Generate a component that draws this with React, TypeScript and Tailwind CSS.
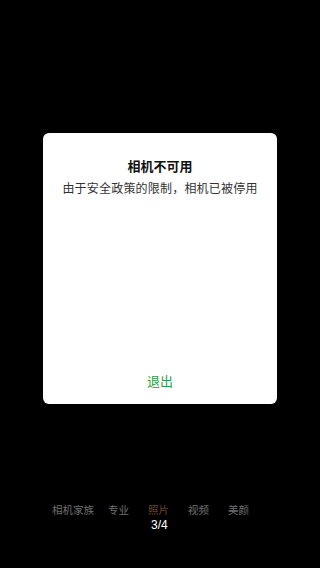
import React from "react";

export default function App() {
  const tabs = [
    { t: "相机家族", c: "text-[#707070]", m: "ml-[52px]" },
    { t: "专业", c: "text-[#707070]", m: "ml-[14px]" },
    { t: "照片", c: "text-[#6b4328]", m: "ml-[19px]" },
    { t: "视频", c: "text-[#707070]", m: "ml-[19px]" },
    { t: "美颜", c: "text-[#707070]", m: "ml-[19px]" },
  ];
  return (
    <div
      className="w-[320px] h-[568px] bg-black flex flex-col overflow-hidden"
      style={{ fontFamily: '"Noto Sans CJK SC", "Noto Sans", sans-serif' }}
    >
      <div className="h-[133px]" />
      <div className="mx-[43px] h-[271px] bg-white rounded-[6px] flex flex-col items-center">
        <div className="mt-[24px] text-[13px] leading-[18px] font-bold text-[#111]">相机不可用</div>
        <div className="mt-[4px] text-[12px] leading-[18px] tracking-[0.2px] text-[#333]">
          由于安全政策的限制，相机已被停用
        </div>
        <div className="mt-auto mb-[14px] text-[13px] leading-[18px] text-[#2f9a48]">退出</div>
      </div>
      <div className="h-[100px]" />
      <div className="flex text-[10.5px] leading-[12px]">
        {tabs.map((x) => (
          <span key={x.t} className={`${x.c} ${x.m}`}>
            {x.t}
          </span>
        ))}
      </div>
      <div
        className="ml-[151px] mt-[3px] text-[12px] leading-[12px] text-white"
        style={{ fontFamily: '"Liberation Sans", Arial, sans-serif' }}
      >
        3/4
      </div>
    </div>
  );
}
